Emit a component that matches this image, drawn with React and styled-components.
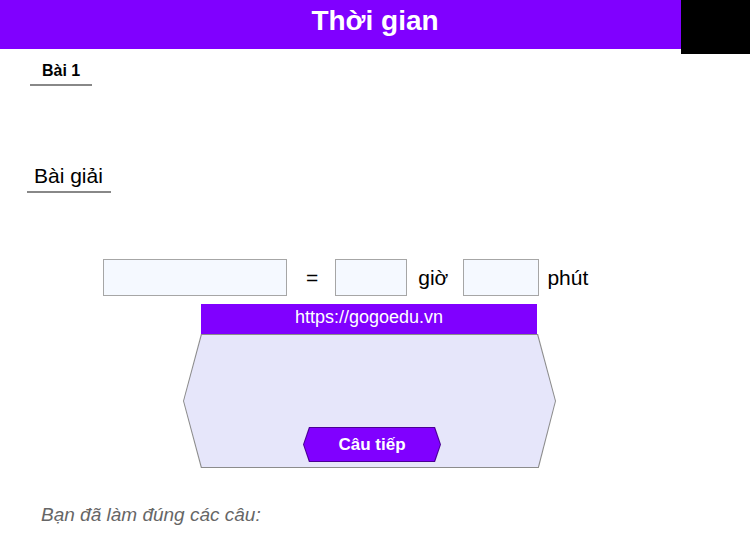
import React from 'react';
import styled, { createGlobalStyle } from 'styled-components';

const GlobalStyle = createGlobalStyle`
  body {
    margin: 0;
    background: #fff;
    font-family: "Liberation Sans", Arial, sans-serif;
  }
  * { box-sizing: border-box; }
`;

const Page = styled.div`
  position: relative;
  width: 750px;
  height: 540px;
  overflow: hidden;
`;

const Header = styled.header`
  height: 49px;
  background: #8000ff;
  color: #fff;
  font-size: 28px;
  font-weight: bold;
  line-height: 42px;
  text-align: center;
`;

const CornerBlock = styled.div`
  position: absolute;
  top: 0;
  right: 0;
  width: 69px;
  height: 54px;
  background: #000;
`;

const Heading = styled.div`
  display: inline-block;
  margin: ${(p) => p.$margin};
  padding: ${(p) => p.$padding};
  font-size: ${(p) => p.$size}px;
  font-weight: ${(p) => (p.$bold ? 'bold' : 'normal')};
  line-height: ${(p) => p.$lh}px;
  color: #000;
  border-bottom: 2px solid #888;
`;

const Block = styled.div``;

const AnswerRow = styled.div`
  display: flex;
  align-items: center;
  margin: 66px 0 0 103px;
  height: 37px;
`;

const Box = styled.input`
  width: ${(p) => p.$w}px;
  height: 37px;
  margin: 0;
  padding: 0 6px;
  background: #f5f9ff;
  border: 1px solid #a6a6a6;
  font: 21px "Liberation Sans", Arial, sans-serif;
  outline: none;
`;

const Word = styled.span`
  font-size: 21px;
  color: #000;
  margin: 0 ${(p) => p.$right}px 0 ${(p) => p.$left}px;
`;

const Card = styled.div`
  display: flex;
  flex-direction: column;
  width: 373px;
  margin: 8px 0 0 183px;
`;

const UrlBar = styled.div`
  margin: 0 19px 0 18px;
  height: 30px;
  background: #8000ff;
  color: #fff;
  font-size: 18px;
  line-height: 27px;
  text-align: center;
`;

const HexOuter = styled.div`
  width: ${(p) => p.$w}px;
  height: ${(p) => p.$h}px;
  padding: 1px;
  background: ${(p) => p.$stroke};
  clip-path: ${(p) => p.$shape};
  margin: ${(p) => p.$margin || '0'};
`;

const HexInner = styled.div`
  width: 100%;
  height: 100%;
  display: flex;
  flex-direction: column;
  align-items: center;
  justify-content: ${(p) => p.$justify || 'center'};
  padding-bottom: ${(p) => p.$pb || 0}px;
  background: ${(p) => p.$fill};
  clip-path: ${(p) => p.$shape};
  color: #fff;
  font-size: 17px;
  font-weight: bold;
  cursor: ${(p) => (p.$button ? 'pointer' : 'default')};
`;

const Result = styled.p`
  margin: 36px 0 0 41px;
  font-size: 19px;
  line-height: 22px;
  font-style: italic;
  color: #666;
`;

const panelShape = 'polygon(4.8% 0, 95.2% 0, 100% 50%, 95.4% 100%, 4.8% 100%, 0 50%)';
const buttonShape = 'polygon(4.3% 0, 95.7% 0, 100% 50%, 95.7% 100%, 4.3% 100%, 0 50%)';

export default function App() {
  return (
    <>
      <GlobalStyle />
      <Page>
        <Header>Thời gian</Header>
        <CornerBlock />

        <Block>
          <Heading $bold $size={16} $lh={18} $margin="13px 0 0 30px" $padding="0 12px 4px 12px">
            Bài 1
          </Heading>
        </Block>
        <Block>
          <Heading $size={21} $lh={24} $margin="78px 0 0 27px" $padding="0 8px 3px 7px">
            Bài giải
          </Heading>
        </Block>

        <AnswerRow>
          <Box $w={184} />
          <Word $left={19} $right={17}>=</Word>
          <Box $w={72} />
          <Word $left={11} $right={15}>giờ</Word>
          <Box $w={76} />
          <Word $left={8} $right={0}>phút</Word>
        </AnswerRow>

        <Card>
          <UrlBar>https://gogoedu.vn</UrlBar>
          <HexOuter $w={373} $h={134} $stroke="#8c8c8c" $shape={panelShape}>
            <HexInner $fill="#e6e6fa" $shape={panelShape} $justify="flex-end" $pb={5}>
              <HexOuter $w={138} $h={35} $stroke="#4a0094" $shape={buttonShape} $margin="0 0 0 5px">
                <HexInner $fill="#8000ff" $shape={buttonShape} $button>
                  Câu tiếp
                </HexInner>
              </HexOuter>
            </HexInner>
          </HexOuter>
        </Card>

        <Result>Bạn đã làm đúng các câu:</Result>
      </Page>
    </>
  );
}
